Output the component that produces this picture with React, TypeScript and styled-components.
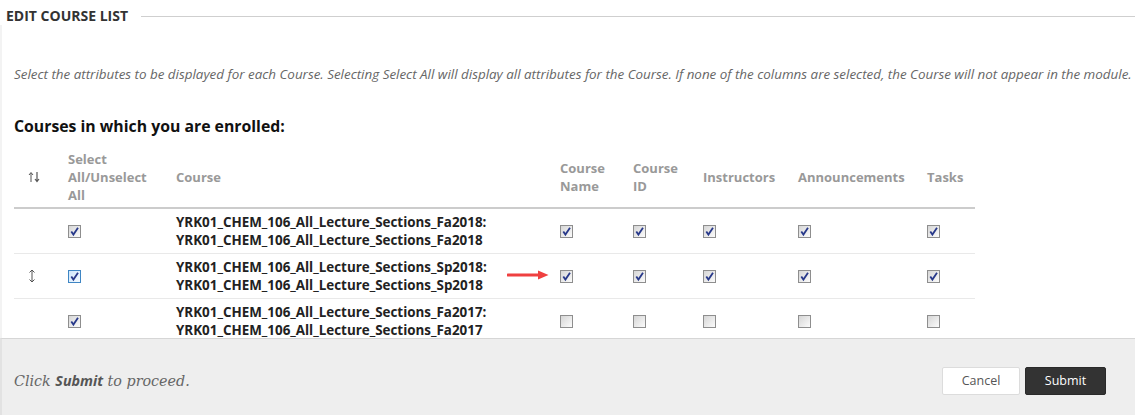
import styled, { createGlobalStyle } from "styled-components";

const GlobalStyle = createGlobalStyle`
  html, body {
    margin: 0;
    padding: 0;
    background: #fff;
  }
  * {
    box-sizing: border-box;
  }
  body {
    font-family: "Open Sans", "Liberation Sans", sans-serif;
    color: #333;
  }
`;

interface Course {
  id: string;
  drag?: boolean;
  focused?: boolean;
  arrow?: boolean;
  attrs: boolean[];
}

const courses: Course[] = [
  { id: "YRK01_CHEM_106_All_Lecture_Sections_Fa2018", attrs: [true, true, true, true, true] },
  {
    id: "YRK01_CHEM_106_All_Lecture_Sections_Sp2018",
    drag: true,
    focused: true,
    arrow: true,
    attrs: [true, true, true, true, true],
  },
  { id: "YRK01_CHEM_106_All_Lecture_Sections_Fa2017", attrs: [false, false, false, false, false] },
];

const columns = ["Course Name", "Course ID", "Instructors", "Announcements", "Tasks"];

const Check = ({ checked, focused }: { checked: boolean; focused?: boolean }) => (
  <Box $focused={focused}>
    {checked && (
      <svg width="11" height="11" viewBox="0 0 11 11">
        <path d="M2.3 5.6 L4.4 8.6 L9 1.8" fill="none" stroke="#28398a" strokeWidth="1.8" />
      </svg>
    )}
  </Box>
);

export default function App() {
  return (
    <>
      <GlobalStyle />
      <Page>
        <Content>
          <TitleBar>
            <h1>EDIT COURSE LIST</h1>
            <Rule />
          </TitleBar>
          <Body>
            <Instructions>
              Select the attributes to be displayed for each Course. Selecting Select All will display all
              attributes for the Course. If none of the columns are selected, the Course will not appear in
              the module.
            </Instructions>
            <SectionTitle>Courses in which you are enrolled:</SectionTitle>
            <Table>
              <HeadRow>
                <IconCell>
                  <svg width="12" height="12" viewBox="0 0 12 12">
                    <path d="M3 11 V2 M1 4 L3 1.5 L5 4" fill="none" stroke="#555" strokeWidth="1" />
                    <path d="M9 1 V10 M7 8 L9 10.5 L11 8" fill="none" stroke="#555" strokeWidth="1.2" />
                  </svg>
                </IconCell>
                <HeadCell>Select All/Unselect All</HeadCell>
                <HeadCell>Course</HeadCell>
                {columns.map((c) => (
                  <HeadCell key={c}>{c}</HeadCell>
                ))}
              </HeadRow>
              {courses.map((course) => (
                <Row key={course.id}>
                  <IconCell>
                    {course.drag && (
                      <svg width="8" height="14" viewBox="0 0 8 14">
                        <path d="M4 1 V13 M1.5 3.5 L4 1 L6.5 3.5 M1.5 10.5 L4 13 L6.5 10.5" fill="none" stroke="#555" strokeWidth="1" />
                      </svg>
                    )}
                  </IconCell>
                  <Cell>
                    <Check checked focused={course.focused} />
                  </Cell>
                  <CourseCell>
                    {course.id}:
                    <br />
                    {course.id}
                  </CourseCell>
                  {course.attrs.map((on, i) => (
                    <Cell key={i}>
                      {course.arrow && i === 0 && (
                        <Arrow width="42" height="10" viewBox="0 0 42 10">
                          <path d="M1 5 H32" stroke="#ef4040" strokeWidth="3" strokeLinecap="round" />
                          <path d="M31 0.5 L41.5 5 L31 9.5 Z" fill="#ef4040" />
                        </Arrow>
                      )}
                      <Check checked={on} />
                    </Cell>
                  ))}
                </Row>
              ))}
            </Table>
          </Body>
        </Content>
        <Footer>
          <Hint>
            Click <b>Submit</b> to proceed.
          </Hint>
          <Buttons>
            <CancelButton>Cancel</CancelButton>
            <SubmitButton>Submit</SubmitButton>
          </Buttons>
        </Footer>
      </Page>
    </>
  );
}

const Page = styled.div`
  height: 100vh;
  display: flex;
  flex-direction: column;
  overflow: hidden;
`;

const Content = styled.div`
  flex: 1;
  overflow: hidden;
  min-height: 0;
`;

const TitleBar = styled.div`
  display: flex;
  align-items: center;
  gap: 13px;
  padding: 7px 0 0 6px;
  height: 25px;

  h1 {
    margin: 0;
    font-size: 14px;
    font-weight: 700;
    color: #333;
    line-height: 20px;
    white-space: nowrap;
  }
`;

const Rule = styled.div`
  flex: 1;
  height: 1px;
  background: #cfcfcf;
`;

const Body = styled.div`
  border-left: 2px solid #f3f3f3;
  padding: 40px 0 0 12px;
  height: 313px;
`;

const Instructions = styled.p`
  margin: 0;
  font-size: 13.4px;
  font-style: italic;
  color: #666;
  line-height: 18px;
  white-space: nowrap;
`;

const SectionTitle = styled.h2`
  margin: 32px 0 0 0;
  font-size: 15.8px;
  font-weight: 700;
  color: #111;
  line-height: 22px;
`;

const Table = styled.div`
  width: 961px;
  margin-top: 2px;
`;

const grid = `
  display: grid;
  grid-template-columns: 54px 108px 384px 73px 70px 95px 129px 48px;
  align-items: center;
`;

const HeadRow = styled.div`
  ${grid}
  height: 70px;
  padding: 11px 0 7px;
  border-bottom: 2px solid #cccccc;
`;

const Row = styled.div`
  ${grid}
  height: 45px;
  border-bottom: 1px solid #e9e9e9;
`;

const IconCell = styled.div`
  display: flex;
  align-items: center;
  padding-left: 14px;
`;

const HeadCell = styled.div`
  font-size: 13px;
  font-weight: 700;
  color: #999;
  line-height: 18px;
  padding-right: 12px;
`;

const Cell = styled.div`
  position: relative;
  display: flex;
  align-items: center;
`;

const CourseCell = styled.div`
  font-size: 13.4px;
  font-weight: 700;
  color: #222;
  line-height: 18px;
  white-space: nowrap;
`;

const Box = styled.span<{ $focused?: boolean }>`
  display: inline-flex;
  align-items: center;
  justify-content: center;
  width: 13px;
  height: 13px;
  border: 1px solid ${(p) => (p.$focused ? "#3f86c4" : "#8e8e8e")};
  background: ${(p) =>
    p.$focused
      ? "linear-gradient(135deg, #cfe6fb, #f4faff)"
      : "linear-gradient(135deg, #d6d6d6, #fbfbfb)"};
`;

const Arrow = styled.svg`
  position: absolute;
  left: -53px;
  top: 50%;
  margin-top: -6px;
`;

const Footer = styled.div`
  height: 77px;
  flex-shrink: 0;
  background: #eeeeee;
  border-top: 1px solid #d6d6d6;
  border-left: 2px solid #e2e2e2;
  display: flex;
  align-items: center;
  justify-content: space-between;
  padding: 7px 29px 0 12px;
`;

const Hint = styled.p`
  margin: 0;
  font-family: "DejaVu Serif", "Liberation Serif", serif;
  font-style: italic;
  font-size: 14.3px;
  color: #666;

  b {
    font-family: "Open Sans", "Liberation Sans", sans-serif;
    font-weight: 700;
    font-style: italic;
    color: #555;
  }
`;

const Buttons = styled.div`
  display: flex;
  gap: 5px;
`;

const BaseButton = styled.button`
  height: 28px;
  font-family: "Open Sans", "Liberation Sans", sans-serif;
  font-size: 12.5px;
  border-radius: 2px;
  cursor: pointer;
`;

const CancelButton = styled(BaseButton)`
  width: 78px;
  background: #fff;
  color: #555;
  border: 1px solid #dcdcdc;
`;

const SubmitButton = styled(BaseButton)`
  width: 81px;
  background: #333;
  color: #fff;
  border: 1px solid #2a2a2a;
`;
